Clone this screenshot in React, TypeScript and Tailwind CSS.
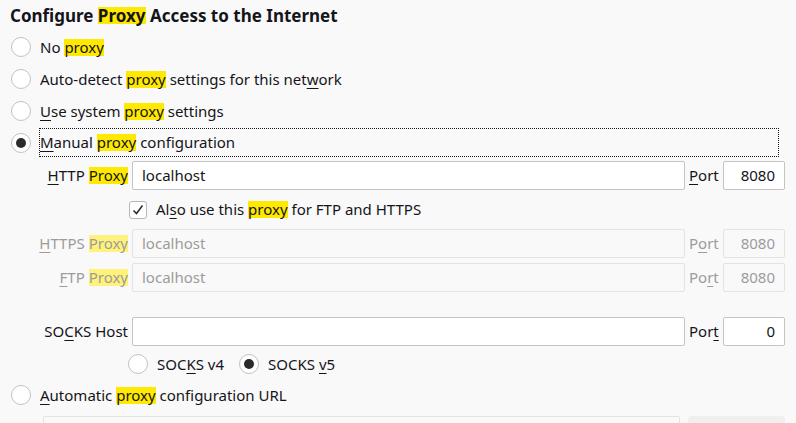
import React from "react";

const Hl = ({ children, dim }: { children: React.ReactNode; dim?: boolean }) => (
  <span className={`inline-block leading-[17px] ${dim ? "bg-[#fff27a]" : "bg-[#ffe900]"}`}>{children}</span>
);

const U = ({ children }: { children: React.ReactNode }) => (
  <span className="underline decoration-1 underline-offset-[3px]">{children}</span>
);

const Radio = ({ checked }: { checked?: boolean }) => (
  <span className="flex h-[20px] w-[20px] shrink-0 items-center justify-center rounded-full border border-[#c2c2c2] bg-white">
    {checked && <span className="h-[10px] w-[10px] rounded-full bg-[#2b2b2b]" />}
  </span>
);

const Field = ({ value, disabled, w, right }: { value: string; disabled?: boolean; w: string; right?: boolean }) => (
  <div
    className={`flex h-[29px] items-center rounded-[2px] border px-[9px] ${w} ${
      right ? "justify-end" : ""
    } ${disabled ? "border-[#e3e3e3] bg-[#f9f9f9] text-[#9c9c9c]" : "border-[#c4c4c4] bg-white text-[#15141a]"}`}
  >
    {value}
  </div>
);

const RadioRow = ({ checked, focus, children }: { checked?: boolean; focus?: boolean; children: React.ReactNode }) => (
  <div className="flex h-[32px] items-center">
    <div className="ml-[11px]">
      <Radio checked={checked} />
    </div>
    <div
      className={`ml-[8px] flex h-[29px] items-center ${
        focus ? "-mt-[2px] w-[740px] border border-dotted border-[#15141a] pl-0" : "pl-px"
      }`}
    >
      {children}
    </div>
  </div>
);

const ProxyRow = ({
  label,
  port,
  value,
  portValue,
  disabled,
}: {
  label: React.ReactNode;
  port: React.ReactNode;
  value: string;
  portValue: string;
  disabled?: boolean;
}) => (
  <div className={`flex items-center ${disabled ? "text-[#9c9c9c]" : ""}`}>
    <div className="w-[128px] text-right">{label}</div>
    <div className="ml-[4px]">
      <Field value={value} disabled={disabled} w="w-[553px]" />
    </div>
    <div className="ml-[4px] w-[30px]">{port}</div>
    <div className="ml-[4px]">
      <Field value={portValue} disabled={disabled} w="w-[62px]" right />
    </div>
  </div>
);

export default function App() {
  return (
    <div
      className="h-[423px] w-[796px] overflow-hidden bg-[#f9f9f9] text-[15px] text-[#15141a]"
      style={{ fontFamily: "'Noto Sans', 'Open Sans', sans-serif" }}
    >
      <div className="flex h-[31px] items-center pl-[10px] text-[17px] font-bold">
        <span>
          Configure <Hl>Proxy</Hl> Access to the Internet
        </span>
      </div>

      <RadioRow>
        <span>
          No <U><Hl>proxy</Hl></U>
        </span>
      </RadioRow>
      <RadioRow>
        <span>
          Auto-detect <Hl>proxy</Hl> settings for this net<U>w</U>ork
        </span>
      </RadioRow>
      <RadioRow>
        <span>
          <U>U</U>se system <Hl>proxy</Hl> settings
        </span>
      </RadioRow>
      <RadioRow checked focus>
        <span>
          <U>M</U>anual <Hl>proxy</Hl> configuration
        </span>
      </RadioRow>

      <div className="mt-[2px]">
        <ProxyRow
          label={
            <>
              <U>H</U>TTP <Hl>Proxy</Hl>
            </>
          }
          port={
            <>
              <U>P</U>ort
            </>
          }
          value="localhost"
          portValue="8080"
        />
      </div>

      <div className="flex h-[39px] items-center pl-[129px]">
        <span className="flex h-[18px] w-[18px] items-center justify-center rounded-[3px] border border-[#b8b8b8] bg-white">
          <svg width="14" height="14" viewBox="0 0 14 14" fill="none">
            <path d="M2.5 7.5 L5.5 10.5 L11.5 2.5" stroke="#2b2b2b" strokeWidth="1.5" />
          </svg>
        </span>
        <span className="ml-[9px]">
          Al<U>s</U>o use this <Hl>proxy</Hl> for FTP and HTTPS
        </span>
      </div>

      <ProxyRow
        disabled
        label={
          <>
            <U>H</U>TTPS <Hl dim>Proxy</Hl>
          </>
        }
        port={
          <>
            P<U>o</U>rt
          </>
        }
        value="localhost"
        portValue="8080"
      />
      <div className="mt-[5px]">
        <ProxyRow
          disabled
          label={
            <>
              <U>F</U>TP <Hl dim>Proxy</Hl>
            </>
          }
          port={
            <>
              Po<U>r</U>t
            </>
          }
          value="localhost"
          portValue="8080"
        />
      </div>

      <div className="mt-[25px]">
        <ProxyRow
          label={
            <>
              SO<U>C</U>KS Host
            </>
          }
          port={
            <>
              Por<U>t</U>
            </>
          }
          value=""
          portValue="0"
        />
      </div>

      <div className="flex h-[36px] items-center pl-[128px]">
        <Radio />
        <span className="ml-[9px]">
          SOC<U>K</U>S v4
        </span>
        <span className="ml-[15px]">
          <Radio checked />
        </span>
        <span className="ml-[9px]">
          SOCKS <U>v</U>5
        </span>
      </div>

      <div className="-mt-[3px]">
        <RadioRow>
          <span>
            <U>A</U>utomatic <Hl>proxy</Hl> configuration URL
          </span>
        </RadioRow>
      </div>

      <div className="mt-[5px] flex items-start pl-[43px]">
        <div className="h-[29px] w-[637px] rounded-[2px] border border-[#e3e3e3] bg-[#f9f9f9]" />
        <div className="ml-[8px] h-[29px] w-[97px] rounded-[4px] bg-[#efefef]" />
      </div>
    </div>
  );
}
